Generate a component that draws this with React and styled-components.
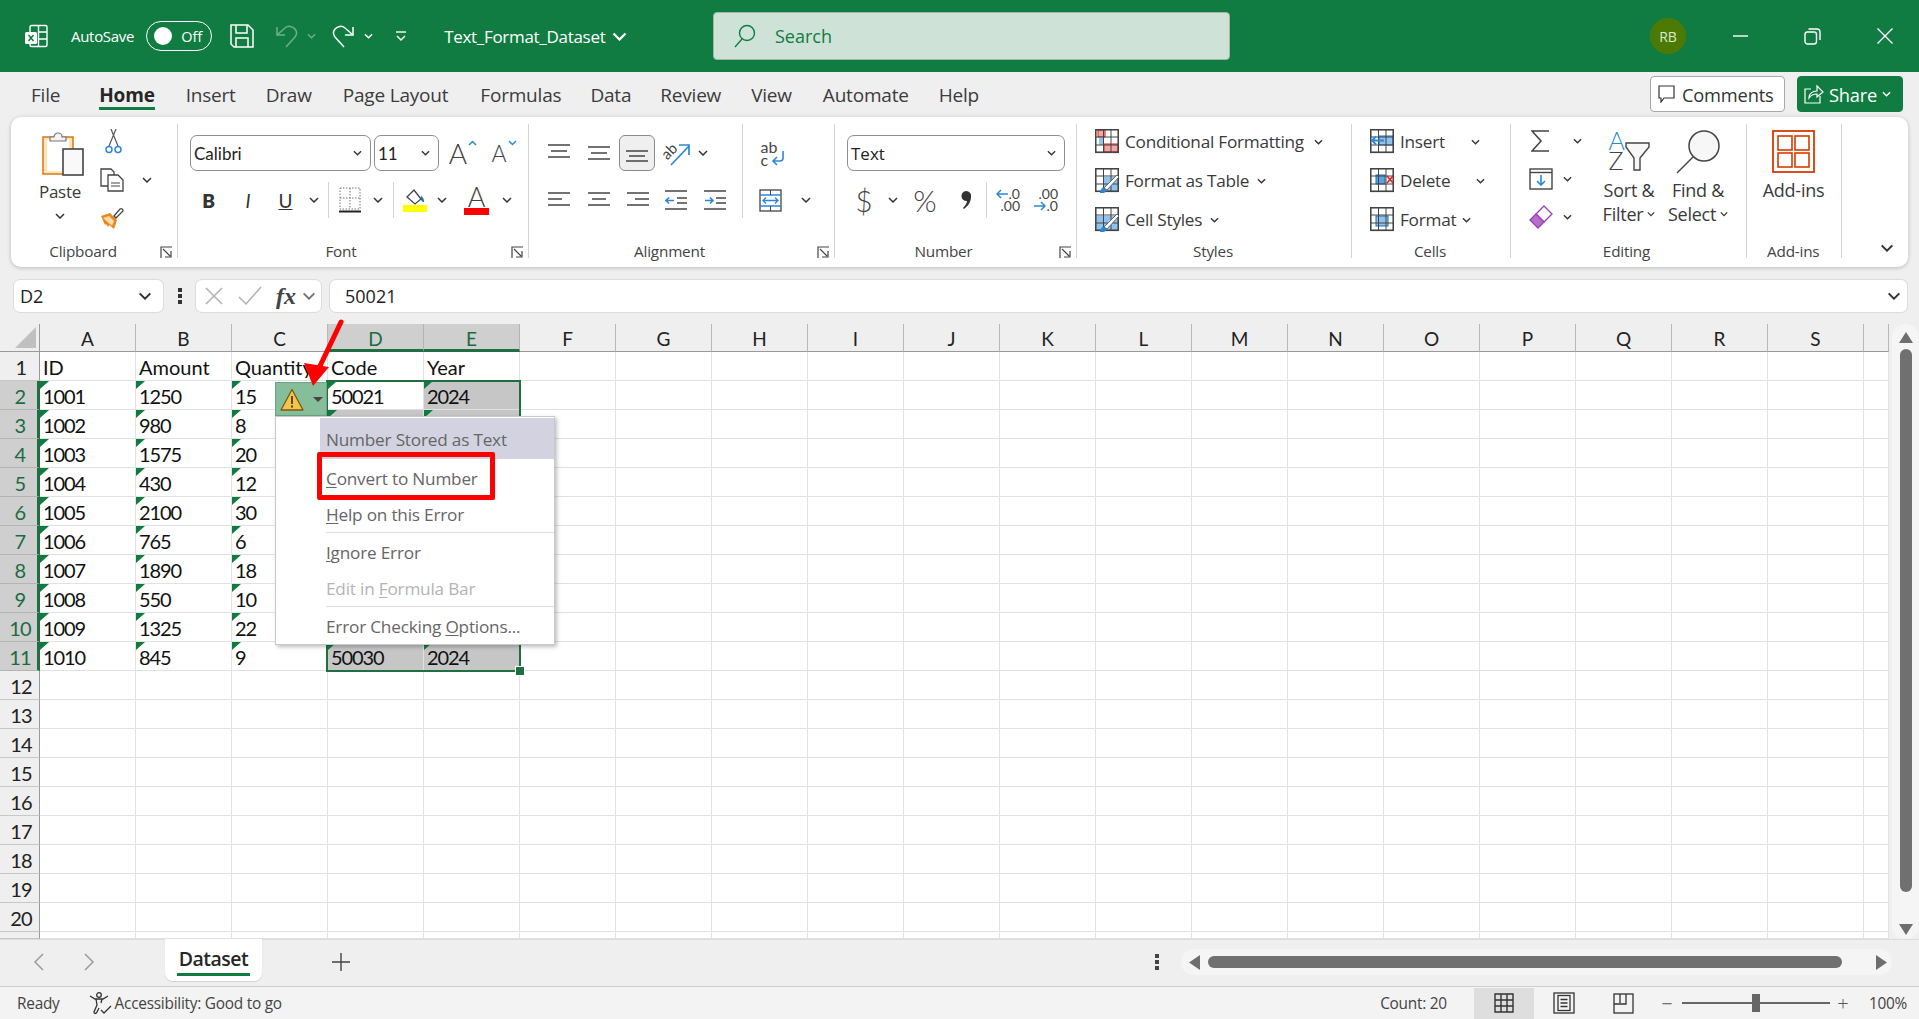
import React from 'react';
import styled, { createGlobalStyle } from 'styled-components';

const green = '#107c41';
const ui = '"Open Sans", "Noto Sans", sans-serif';
const calibri = 'Lato, "Open Sans", sans-serif';

const Global = createGlobalStyle`
  html, body { margin: 0; padding: 0; background: #efefef; overflow: hidden; }
  * { box-sizing: border-box; }
  svg { display: block; flex: none; }
`;

const Page = styled.div`
  width: 1919px;
  height: 1019px;
  display: flex;
  flex-direction: column;
  background: #efefef;
  font-family: ${ui};
  color: #333;
  overflow: hidden;
`;

/* ---------- title bar ---------- */
const TitleBar = styled.div`
  height: 72px;
  flex: none;
  background: ${green};
  display: flex;
  align-items: center;
  color: #fff;
`;
const QuickAccess = styled.div`
  width: 713px;
  flex: none;
  display: flex;
  align-items: center;
  padding-left: 24px;
`;
const Spaced = styled.div`
  margin-left: ${(p) => p.$ml || 0}px;
  display: flex;
  align-items: center;
`;
const TitleText = styled.span`
  margin-left: ${(p) => p.$ml || 0}px;
  font-size: ${(p) => p.$size || 15}px;
  letter-spacing: -0.3px;
  white-space: nowrap;
`;
const Toggle = styled.div`
  margin-left: 12px;
  width: 66px;
  height: 30px;
  border: 1.5px solid #fff;
  border-radius: 15px;
  display: flex;
  align-items: center;
  padding-left: 7px;
  font-size: 14.5px;
  gap: 9px;
  &::before {
    content: '';
    width: 18px;
    height: 18px;
    border-radius: 50%;
    background: #fff;
  }
`;
const SearchBox = styled.div`
  width: 517px;
  height: 48px;
  flex: none;
  background: #cfe2d7;
  border: 1px solid #9fb8aa;
  border-radius: 4px;
  display: flex;
  align-items: center;
  padding-left: 20px;
  gap: 19px;
  color: ${green};
  font-size: 18px;
`;
const WindowControls = styled.div`
  flex: 1;
  display: flex;
  align-items: center;
  justify-content: flex-end;
  padding-right: 26px;
`;
const Avatar = styled.div`
  width: 36px;
  height: 36px;
  border-radius: 50%;
  background: #4d7a05;
  color: #d8ecd0;
  font-size: 14px;
  display: flex;
  align-items: center;
  justify-content: center;
`;

/* ---------- menu tabs ---------- */
const TabsRow = styled.div`
  height: 45px;
  flex: none;
  display: flex;
  align-items: center;
  padding: 0 16px 0 31px;
`;
const Tab = styled.div`
  position: relative;
  margin-left: ${(p) => p.$ml}px;
  font-size: 19px;
  letter-spacing: -0.2px;
  font-weight: ${(p) => (p.$active ? 700 : 400)};
  color: ${(p) => (p.$active ? '#262626' : '#3c3c3c')};
  white-space: nowrap;
  ${(p) =>
    p.$active &&
    `&::after {
      content: '';
      position: absolute;
      left: 0;
      right: 0;
      bottom: -2px;
      height: 3px;
      background: ${green};
    }`}
`;
const TabActions = styled.div`
  margin-left: auto;
  display: flex;
  gap: 12px;
  align-self: flex-start;
  margin-top: 4px;
`;
const ActionButton = styled.div`
  height: 36px;
  width: ${(p) => p.$w}px;
  border-radius: 4px;
  display: flex;
  align-items: center;
  gap: ${(p) => p.$gap}px;
  padding-left: ${(p) => p.$pad}px;
  font-size: 18.3px;
  letter-spacing: -0.2px;
  background: ${(p) => (p.$primary ? green : '#fff')};
  color: ${(p) => (p.$primary ? '#fff' : '#333')};
  border: 1px solid ${(p) => (p.$primary ? green : '#a8a8a8')};
`;

/* ---------- ribbon ---------- */
const Ribbon = styled.div`
  height: 150px;
  flex: none;
  margin: 0 11px 0 11px;
  background: #fff;
  border-radius: 10px;
  box-shadow: 0 1px 4px rgba(0, 0, 0, 0.22);
  display: flex;
  padding-top: 7px;
`;
const Group = styled.div`
  width: ${(p) => p.$w}px;
  height: 134px;
  flex: none;
  display: flex;
  flex-direction: column;
  border-right: 1.5px solid #d4d4d4;
`;
const GroupBody = styled.div`
  flex: 1;
  display: flex;
  min-height: 0;
  padding-left: ${(p) => p.$pad || 0}px;
`;
const GroupLabel = styled.div`
  height: 20px;
  flex: none;
  display: grid;
  grid-template-columns: 20px 1fr 20px;
  align-items: center;
  font-size: 15.3px;
  line-height: 14px;
  letter-spacing: -0.2px;
  color: #444;
  text-align: center;
  padding-top: 6px;
  & > span {
    grid-column: 2;
    margin-right: ${(p) => p.$shift || 0}px;
    white-space: nowrap;
  }
`;
const Launcher = styled.div`
  grid-column: 3;
  align-self: end;
  justify-self: end;
  margin-right: 5px;
`;
const Stack = styled.div`
  display: flex;
  flex-direction: column;
  width: ${(p) => (p.$w ? `${p.$w}px` : 'auto')};
  padding-top: ${(p) => p.$top || 0}px;
  margin-top: ${(p) => p.$mt || 0}px;
`;
const ToolRow = styled.div`
  height: ${(p) => p.$h || 36}px;
  display: flex;
  align-items: center;
  margin-top: ${(p) => p.$mt || 0}px;
  margin-left: ${(p) => p.$ml || 0}px;
  gap: ${(p) => p.$gap || 0}px;
  flex: none;
`;
const Tool = styled.div`
  width: ${(p) => p.$w}px;
  height: ${(p) => (p.$active ? '36px' : 'auto')};
  flex: none;
  display: flex;
  justify-content: center;
  align-items: center;
  ${(p) =>
    p.$active &&
    `background: #efefef; border: 1px solid #8a8a8a; border-radius: 6px;`}
`;
const Sep = styled.div`
  width: 1px;
  height: ${(p) => p.$h || 36}px;
  flex: none;
  background: #d4d4d4;
  margin: 0 ${(p) => p.$m || 0}px;
`;
const ComboBox = styled.div`
  width: ${(p) => p.$w}px;
  height: 36px;
  flex: none;
  border: 1px solid #8e8e8e;
  border-radius: 7px;
  display: flex;
  align-items: center;
  justify-content: space-between;
  padding: 0 8px 0 3px;
  font-family: ${(p) => (p.$lato ? calibri : ui)};
  font-size: 17px;
  color: #222;
`;
const BoldGlyph = styled.span`
  font-family: ${calibri};
  font-size: 19px;
  font-weight: ${(p) => (p.$b ? 800 : 400)};
  font-style: ${(p) => (p.$i ? 'italic' : 'normal')};
  text-decoration: ${(p) => (p.$u ? 'underline' : 'none')};
  color: #333;
`;
const BigGlyph = styled.span`
  font-size: ${(p) => p.$size || 30}px;
  line-height: 1;
  font-family: ${calibri};
  color: #444;
  font-weight: 300;
`;
const Letter = styled.span`
  display: block;
  font-family: ${calibri};
  font-size: ${(p) => p.$size}px;
  line-height: ${(p) => p.$lh || p.$size}px;
  height: ${(p) => p.$lh || p.$size}px;
  color: ${(p) => p.$c || '#444'};
  font-weight: ${(p) => p.$weight || 400};
`;
const GrowGroup = styled.div`
  display: flex;
  align-items: flex-start;
  gap: 1px;
  & > svg {
    margin-top: 2px;
  }
`;
const ColorGlyph = styled.div`
  display: flex;
  flex-direction: column;
  align-items: center;
  width: 25px;
  &::after {
    content: '';
    width: 25px;
    height: 7px;
    background: #f00;
  }
`;
const WrapGlyph = styled.div`
  display: flex;
  align-items: flex-end;
  & > svg {
    margin-left: -6px;
  }
`;
const LetterColumn = styled.div`
  display: flex;
  flex-direction: column;
  align-items: flex-start;
`;
const DecimalGlyph = styled.div`
  width: 24px;
  display: flex;
  flex-direction: column;
  align-items: ${(p) => (p.$more ? 'flex-start' : 'flex-end')};
`;
const DecimalLine = styled.div`
  height: 12px;
  display: flex;
  align-items: center;
  justify-content: flex-end;
  width: 24px;
  gap: 1px;
  font-family: ${calibri};
  font-size: 14px;
  line-height: 12px;
  color: #444;
`;
const SortGlyph = styled.div`
  display: flex;
  align-items: flex-start;
  gap: 0;
`;
const ListLine = styled.div`
  height: 39px;
  display: flex;
  align-items: center;
  flex: none;
  font-size: 17.2px;
  letter-spacing: -0.25px;
  white-space: nowrap;
  color: #3a3a3a;
  gap: 6px;
`;
const ChevGap = styled.span`
  margin-left: ${(p) => p.$ml || 0}px;
  display: flex;
`;
const BigButton = styled.div`
  width: ${(p) => p.$w}px;
  flex: none;
  display: flex;
  flex-direction: column;
  align-items: center;
  padding-top: 6px;
  font-size: ${(p) => p.$size || 18}px;
  letter-spacing: -0.25px;
  line-height: 24px;
  color: #3a3a3a;
  white-space: nowrap;
`;
const IconSlot = styled.div`
  height: ${(p) => p.$h}px;
  margin-left: ${(p) => p.$ml || 0}px;
  flex: none;
`;
const TextLine = styled.div`
  display: flex;
  align-items: center;
  gap: 4px;
`;
const CollapseArea = styled.div`
  flex: 1;
  display: flex;
  justify-content: flex-end;
  align-items: flex-end;
  padding: 0 14px 15px 0;
`;

/* ---------- formula bar ---------- */
const FormulaBar = styled.div`
  height: 57px;
  flex: none;
  display: flex;
  padding: 12px 11px 11px 13px;
`;
const FieldBox = styled.div`
  height: 34px;
  background: #fff;
  border: 1px solid #dcdcdc;
  border-radius: 7px;
  display: flex;
  align-items: center;
  font-size: 18px;
  color: #222;
`;
const NameBox = styled(FieldBox)`
  width: 151px;
  justify-content: space-between;
  padding: 0 11px 0 6px;
  font-family: ${ui};
`;
const Dots = styled.div`
  width: 31px;
  display: flex;
  justify-content: center;
  align-items: center;
`;
const FxBox = styled(FieldBox)`
  width: 127px;
  padding-left: 8px;
`;
const FxGlyph = styled.span`
  font-family: 'Liberation Serif', serif;
  font-style: italic;
  font-size: 24px;
  font-weight: 700;
  color: #444;
  margin: 0 6px 0 14px;
`;
const FormulaInput = styled(FieldBox)`
  margin-left: 7px;
  flex: 1;
  justify-content: space-between;
  padding: 0 6px 0 15px;
  font-family: ${ui};
`;

/* ---------- sheet ---------- */
const SheetArea = styled.div`
  height: 615px;
  flex: none;
  display: flex;
`;
const GridWrap = styled.div`
  position: relative;
  width: 1889px;
  flex: none;
  background: #fff;
`;
const Grid = styled.div`
  display: grid;
  grid-template-columns: 40px repeat(19, 96px) 25px;
  grid-template-rows: 28px repeat(20, 29px) 7px;
  font-family: ${calibri};
  font-size: 20px;
  color: #111;
  overflow: hidden;
`;
const Corner = styled.div`
  background: #efefef;
  border-right: 1px solid #9a9a9a;
  border-bottom: 1.5px solid #9a9a9a;
  display: flex;
  align-items: flex-end;
  justify-content: flex-end;
  padding: 0 3px 3px 0;
  &::after {
    content: '';
    border-bottom: 21px solid #c0c0c0;
    border-left: 21px solid transparent;
  }
`;
const ColHead = styled.div`
  background: ${(p) => (p.$sel ? '#cfcfcf' : '#efefef')};
  color: ${(p) => (p.$sel ? '#1c6b3f' : '#222')};
  border-right: 1px solid ${(p) => (p.$sel ? '#b4b4b4' : '#b8b8b8')};
  border-bottom: ${(p) => (p.$sel ? `3px solid #1f6f43` : '1.5px solid #9a9a9a')};
  display: flex;
  justify-content: center;
  align-items: center;
  font-size: 19px;
  padding-top: ${(p) => (p.$sel ? 3 : 2)}px;
`;
const RowHead = styled.div`
  background: ${(p) => (p.$sel ? '#cfcfcf' : '#efefef')};
  color: ${(p) => (p.$sel ? '#1c6b3f' : '#222')};
  border-right: ${(p) => (p.$sel ? '3px solid #1f6f43' : '1px solid #9a9a9a')};
  border-bottom: 1px solid ${(p) => (p.$sel ? '#b4b4b4' : '#c8c8c8')};
  display: flex;
  justify-content: center;
  align-items: center;
  padding: 2px 0 0 3px;
  letter-spacing: -0.8px;
`;
const Cell = styled.div`
  position: relative;
  background: ${(p) => (p.$sel ? '#c6c6c6' : '#fff')};
  border-right: 1px solid #e1e1e1;
  border-bottom: 1px solid #e1e1e1;
  display: flex;
  align-items: center;
  padding: 2px 0 0 3px;
  white-space: nowrap;
  letter-spacing: ${(p) => (p.$num ? '-1.1px' : '0')};
  ${(p) =>
    p.$flag &&
    `&::before {
      content: '';
      position: absolute;
      left: 0;
      top: 0;
      border-top: 8px solid #0f7b3e;
      border-right: 9px solid transparent;
    }`}
`;
const Selection = styled.div`
  position: absolute;
  left: 326px;
  top: 56px;
  width: 195px;
  height: 292px;
  border: 2.5px solid #1f6f43;
  pointer-events: none;
  &::after {
    content: '';
    position: absolute;
    right: -6px;
    bottom: -6px;
    width: 8px;
    height: 8px;
    background: #1f6f43;
    border: 1px solid #fff;
  }
`;
const ErrorButton = styled.div`
  position: absolute;
  left: 275px;
  top: 58px;
  width: 52px;
  height: 34px;
  background: #86bd9a;
  border: 1px solid #6aa582;
  display: flex;
  align-items: center;
  padding-left: 4px;
  gap: 9px;
`;
const Popup = styled.div`
  position: absolute;
  left: 275px;
  top: 92px;
  width: 280px;
  height: 229px;
  background: #fff;
  border: 1px solid #c9c9c9;
  box-shadow: 2px 2px 4px rgba(0, 0, 0, 0.25);
  font-family: ${ui};
  font-size: 17.2px;
  letter-spacing: -0.2px;
  color: #666;
`;
const PopupTitle = styled.div`
  margin: 1px 0 2px 44px;
  height: 41px;
  background: #d2d2e0;
  padding: 1px 0 0 6px;
  display: flex;
  align-items: center;
`;
const PopupItem = styled.div`
  height: 36px;
  padding: 0 0 2px 50px;
  display: flex;
  align-items: center;
  color: ${(p) => (p.$disabled ? '#b4b4b4' : '#666')};
  white-space: pre;
  & u {
    text-underline-offset: 2px;
  }
`;
const PopupRule = styled.div`
  height: 1px;
  background: #dedede;
  margin: -1px 0 2px 50px;
`;
const RedBox = styled.div`
  position: absolute;
  left: 41px;
  top: 35px;
  width: 178px;
  height: 48px;
  border: 5px solid #f00;
  border-radius: 2px;
`;
const ArrowMark = styled.svg`
  position: absolute;
  left: 300px;
  top: -6px;
`;

/* ---------- vertical scroll ---------- */
const VScroll = styled.div`
  flex: 1;
  display: flex;
  flex-direction: column;
  align-items: center;
  margin-left: 3px;
  background: #f5f5f5;
  border-radius: 13px;
  padding: 8px 0 4px;
`;
const VThumb = styled.div`
  width: 12px;
  height: 543px;
  margin-top: 6px;
  background: #707070;
  border-radius: 6px;
`;
const ArrowPad = styled.div`
  margin-top: ${(p) => p.$mt || 0}px;
  margin-left: ${(p) => p.$ml || 0}px;
`;

/* ---------- sheet tabs ---------- */
const TabStrip = styled.div`
  height: 48px;
  flex: none;
  display: flex;
  align-items: flex-start;
  border-bottom: 1.5px solid #cfcfcf;
  border-top: 1px solid #dcdcdc;
`;
const Nav = styled.div`
  width: 165px;
  height: 44px;
  flex: none;
  display: flex;
  align-items: center;
  padding-left: 34px;
  gap: 40px;
`;
const SheetTab = styled.div`
  width: 97px;
  height: 42px;
  flex: none;
  background: #fff;
  border-radius: 0 0 8px 8px;
  display: flex;
  justify-content: center;
  padding-top: 5px;
  box-shadow: 0 1px 1px rgba(0, 0, 0, 0.12);
  margin-top: -1px;
`;
const SheetName = styled.div`
  height: 32px;
  width: 73px;
  text-align: center;
  border-bottom: 3px solid ${green};
  font-size: 19.5px;
  font-weight: 600;
  letter-spacing: -0.5px;
  color: #262626;
  line-height: 29px;
  white-space: nowrap;
`;
const AddSheet = styled.div`
  width: 150px;
  height: 44px;
  display: flex;
  align-items: center;
  padding-left: 70px;
`;
const MoreDots = styled.div`
  width: 24px;
  height: 44px;
  margin-left: 733px;
  margin-right: 12px;
  display: flex;
  align-items: center;
  justify-content: center;
`;
const HScroll = styled.div`
  margin-top: 9px;
  width: 711px;
  height: 26px;
  flex: none;
  background: #f5f5f5;
  border-radius: 13px;
  display: flex;
  align-items: center;
  padding-left: 8px;
  gap: 8px;
`;
const HThumb = styled.div`
  width: 634px;
  height: 12px;
  background: #707070;
  border-radius: 6px;
`;

/* ---------- status bar ---------- */
const StatusBar = styled.div`
  flex: 1;
  display: flex;
  align-items: center;
  background: #f3f3f3;
  font-size: 15.4px;
  letter-spacing: -0.25px;
  color: #444;
  padding: 0 12px 0 17px;
`;
const StatusText = styled.span`
  margin-left: ${(p) => p.$ml || 0}px;
  white-space: nowrap;
`;
const StatusRight = styled.div`
  margin-left: auto;
  display: flex;
  align-items: center;
`;
const CountText = styled.span`
  margin-right: 27px;
`;
const ViewButton = styled.div`
  width: 60px;
  height: 31px;
  flex: none;
  display: flex;
  align-items: center;
  justify-content: center;
  background: ${(p) => (p.$active ? '#dedede' : 'transparent')};
`;
const ZoomSlider = styled.div`
  position: relative;
  width: 148px;
  height: 2px;
  background: #666;
  margin: 0 3px 0 5px;
  &::after {
    content: '';
    position: absolute;
    left: 70px;
    top: -8px;
    width: 8px;
    height: 18px;
    background: #666;
  }
`;
const ZoomMark = styled.span`
  font-size: 20px;
  font-weight: 300;
  color: #555;
  width: 20px;
  text-align: center;
  margin-left: ${(p) => p.$ml || 0}px;
`;

/* ---------- icons ---------- */
const Chev = ({ c = '#333', w = 10, h = 6, sw = 1.5 }) => (
  <svg width={w} height={h} viewBox="0 0 10 6">
    <path d="M1 1l4 4 4-4" fill="none" stroke={c} strokeWidth={sw} />
  </svg>
);
const ExcelIcon = () => (
  <svg width="24" height="24" viewBox="0 0 24 24" fill="none" stroke="#fff" strokeWidth="1.4">
    <path d="M6 8V3a1.5 1.5 0 0 1 1.5-1.5h14A1.5 1.5 0 0 1 23 3v18a1.5 1.5 0 0 1-1.5 1.5h-14A1.5 1.5 0 0 1 6 21v-1" />
    <path d="M14.5 1.5v21M14.5 8H23M14.5 15H23" />
    <rect x="1" y="8" width="12" height="12" rx="1.5" fill="#fff" stroke="none" />
    <path d="M4.5 11l5 6M9.5 11l-5 6" stroke={green} strokeWidth="1.5" />
  </svg>
);
const SaveIcon = () => (
  <svg width="24" height="24" viewBox="0 0 24 24" fill="none" stroke="#fff" strokeWidth="1.5">
    <path d="M1 1h17l5 5v17H4l-3-3z" />
    <path d="M6 1v8h11V1M6 23v-9h12v9" />
  </svg>
);
const UndoIcon = ({ c = '#fff', flip }) => (
  <svg width="23" height="24" viewBox="0 0 23 24" fill="none" stroke={c} strokeWidth="1.5">
    {flip ? (
      <g>
        <path d="M12 23L3 13a6.5 6.5 0 0 1 0-8 7 7 0 0 1 10-1l8 7" />
        <path d="M21 3v8h-8" />
      </g>
    ) : (
      <g>
        <path d="M11 23l9-10a6.5 6.5 0 0 0 0-8 7 7 0 0 0-10-1L2 11" />
        <path d="M2 3v8h8" />
      </g>
    )}
  </svg>
);
const CustomizeIcon = () => (
  <svg width="10" height="11" viewBox="0 0 10 11" fill="none" stroke="#fff" strokeWidth="1.4">
    <path d="M0 1h10" />
    <path d="M1 5l4 4 4-4" />
  </svg>
);
const SearchIcon = () => (
  <svg width="22" height="24" viewBox="0 0 22 24" fill="none" stroke={green} strokeWidth="1.4">
    <circle cx="13" cy="9" r="7.5" />
    <path d="M8 15L1 23" />
  </svg>
);
const MinIcon = () => (
  <svg width="15" height="2" viewBox="0 0 15 2">
    <path d="M0 1h15" stroke="#fff" strokeWidth="1.4" />
  </svg>
);
const RestoreIcon = () => (
  <svg width="17" height="17" viewBox="0 0 17 17" fill="none" stroke="#fff" strokeWidth="1.4">
    <rect x="1" y="4" width="11.5" height="12" rx="2.5" />
    <path d="M4.5 1H13a3 3 0 0 1 3 3v8" />
  </svg>
);
const CloseIcon = () => (
  <svg width="16" height="16" viewBox="0 0 16 16" stroke="#fff" strokeWidth="1.4">
    <path d="M0.5 0.5l15 15M15.5 0.5l-15 15" />
  </svg>
);
const CommentIcon = () => (
  <svg width="17" height="18" viewBox="0 0 17 18" fill="none" stroke="#333" strokeWidth="1.2">
    <path d="M1 1h15v12H6l-3 4v-4H1z" />
  </svg>
);
const ShareIcon = () => (
  <svg width="20" height="20" viewBox="0 0 20 20" fill="none" stroke="#fff" strokeWidth="1.2">
    <path d="M7 5H1v14h15v-7" />
    <path d="M5 14c0-5 4-7 8-7V2l6 6-6 5V10c-3 0-6 1-8 4z" />
  </svg>
);
const PasteIcon = () => (
  <svg width="42" height="46" viewBox="0 0 42 46">
    <rect x="1" y="7" width="30" height="37" fill="#fde6bd" stroke="#d9780f" strokeWidth="1.5" />
    <rect x="5" y="10" width="22" height="31" fill="#fff" />
    <path d="M8 11V7h4a4 4 0 0 1 8 0h4v4z" fill="#f2f2f2" stroke="#777" strokeWidth="1.2" />
    <rect x="21" y="19" width="20" height="26" fill="#f9f9f9" stroke="#444" strokeWidth="1.6" />
  </svg>
);
const ScissorsIcon = () => (
  <svg width="17" height="25" viewBox="0 0 17 25" fill="none">
    <path d="M4 17L11 0M13 17L6 0" stroke="#555" strokeWidth="1.2" />
    <circle cx="4" cy="20.5" r="3" stroke="#2b88d8" strokeWidth="1.5" />
    <circle cx="13" cy="20.5" r="3" stroke="#2b88d8" strokeWidth="1.5" />
  </svg>
);
const CopyIcon = () => (
  <svg width="24" height="24" viewBox="0 0 24 24" fill="#fff" stroke="#444" strokeWidth="1.3">
    <path d="M1 1h10l3 3v14H1z" />
    <path d="M8 7h10l5 5v11H8z" />
    <path d="M11 15h9M11 18h9" strokeWidth="1" />
  </svg>
);
const BrushIcon = () => (
  <svg width="24" height="23" viewBox="0 0 24 23">
    <path d="M1 9l9-3 7 7-3 9-5-4-1 2-2-3-1 1z" fill="#e8871e" />
    <path d="M3 11l6-2 5 5-2 5z" fill="#fbd9a8" />
    <path d="M14 9l6-7a2 2 0 0 1 3 2l-7 7z" fill="#fff" stroke="#444" strokeWidth="1.3" />
  </svg>
);
const LauncherIcon = () => (
  <svg width="12" height="12" viewBox="0 0 12 12" fill="none" stroke="#444" strokeWidth="1.2">
    <path d="M1 12V1h11" />
    <path d="M3 3l7 7M5 11h6V5" />
  </svg>
);
const GrowA = ({ down }) => (
  <GrowGroup>
    <Letter $size={down ? 23 : 28} $lh={30} $weight={300}>A</Letter>
    <svg width="9" height="6" viewBox="0 0 9 6" fill="none">
      <path d={down ? 'M1 1l3.5 3.5L8 1' : 'M1 5l3.5-3.5L8 5'} stroke="#2b88d8" strokeWidth="1.5" />
    </svg>
  </GrowGroup>
);
const BordersIcon = () => (
  <svg width="22" height="26" viewBox="0 0 22 26" fill="none">
    <path d="M1 1h20v21H1zM11 1v21M1 11h20" stroke="#777" strokeWidth="1" strokeDasharray="1.5 1.5" />
    <path d="M0 24.5h22" stroke="#222" strokeWidth="2" />
  </svg>
);
const FillIcon = () => (
  <svg width="24" height="24" viewBox="0 0 24 24">
    <path d="M4 9l7-7 7 9-6 5z" fill="#fff" stroke="#444" strokeWidth="1.3" />
    <path d="M18 8c2 1 3 3 3 6-2 0-4-2-3-6z" fill="#1f6fb5" />
    <rect x="0" y="17" width="24" height="7" fill="#ff0" />
  </svg>
);
const FontColorIcon = () => (
  <ColorGlyph>
    <Letter $size={27} $lh={22} $weight={300}>A</Letter>
  </ColorGlyph>
);
const Lines = ({ rows, w = 22, h = 20, arrow }) => (
  <svg width={w} height={h} viewBox={`0 0 ${w} ${h}`} fill="none">
    {rows.map(([a, b, y], i) => (
      <path key={i} d={`M${a} ${y}H${b}`} stroke="#444" strokeWidth="1.5" />
    ))}
    {arrow && <path d={arrow} stroke="#2b88d8" strokeWidth="1.6" />}
  </svg>
);
const OrientIcon = () => (
  <svg width="36" height="36" viewBox="-3 -3 36 36" fill="none">
    <text x="1" y="18" fontFamily={calibri} fontSize="15" fill="#444" transform="rotate(-45 9 14)">ab</text>
    <path d="M10 27L28 8M18 7h10v10" stroke="#2b88d8" strokeWidth="1.7" />
  </svg>
);
const WrapIcon = () => (
  <WrapGlyph>
    <LetterColumn>
      <Letter $size={16} $lh={13}>ab</Letter>
      <Letter $size={16} $lh={13}>c</Letter>
    </LetterColumn>
    <svg width="14" height="16" viewBox="0 0 14 16" fill="none">
      <path d="M12 1v7a3 3 0 0 1-3 3H2M6 7l-4 4 4 4" stroke="#2b88d8" strokeWidth="1.6" />
    </svg>
  </WrapGlyph>
);
const MergeIcon = () => (
  <svg width="23" height="23" viewBox="0 0 23 23" fill="none">
    <rect x="1" y="1" width="21" height="21" stroke="#444" strokeWidth="1.3" />
    <path d="M1 6h21M1 17h21" stroke="#2b88d8" strokeWidth="1.6" />
    <path d="M11.5 1v5M11.5 17v5" stroke="#444" />
    <path d="M4 11.5h15M7 8.5l-3 3 3 3M16 8.5l3 3-3 3" stroke="#2b88d8" strokeWidth="1.3" />
  </svg>
);
const SmallArrow = ({ right }) => (
  <svg width="12" height="10" viewBox="0 0 12 10" fill="none">
    <path d={right ? 'M0 5h11M7 1l4 4-4 4' : 'M12 5H1M5 1L1 5l4 4'} stroke="#2b88d8" strokeWidth="1.5" />
  </svg>
);
const DecimalIcon = ({ more }) => (
  <DecimalGlyph $more={more}>
    {more ? (
      <>
        <DecimalLine>.00</DecimalLine>
        <DecimalLine><SmallArrow right />.0</DecimalLine>
      </>
    ) : (
      <>
        <DecimalLine><SmallArrow />.0</DecimalLine>
        <DecimalLine>.00</DecimalLine>
      </>
    )}
  </DecimalGlyph>
);
const CommaIcon = () => (
  <svg width="12" height="20" viewBox="0 0 12 20">
    <path d="M6 1a5 5 0 0 1 5 6c0 5-3 9-7 12l-1-1c2-2 4-5 4-7a5 5 0 1 1-1-10z" fill="#333" />
  </svg>
);
const TableIcon = ({ kind }) => (
  <svg width="24" height="26" viewBox="0 0 24 26" fill="none">
    {kind === 'cond' && (
      <g>
        <rect x="3" y="1" width="7" height="7" fill="#f4a5a5" stroke="#e02020" />
        <rect x="9" y="15" width="14" height="8" fill="#f4a5a5" stroke="#e02020" />
        <rect x="4" y="8" width="5" height="8" fill="#8fc3ee" />
      </g>
    )}
    {kind === 'table' && <path d="M9 9h14v14H5l4-6z" fill="#8fc3ee" />}
    {kind === 'styles' && <path d="M1 9h22v14H1z" fill="#8fc3ee" />}
    {kind === 'insert' && <rect x="9" y="7" width="14" height="9" fill="#8fc3ee" stroke="#1f6fb5" />}
    {kind === 'delete' && <rect x="6" y="7" width="9" height="9" fill="#5aa5e0" stroke="#1f6fb5" />}
    {kind === 'format' && <rect x="6" y="9" width="12" height="10" fill="#8fc3ee" stroke="#1f6fb5" />}
    <path d="M1 1h22v22H1zM1 8h22M1 16h22M8.5 1v22M16 1v22" stroke="#444" strokeWidth="1" />
    <rect x="0.5" y="0.5" width="23" height="23" stroke="#444" strokeWidth="1.2" />
    {(kind === 'table' || kind === 'styles') && (
      <g>
        <path d="M5 25c0-4 3-6 5-5s1 4-1 5z" fill="#2b88d8" />
        <path d="M9 20L22 7l2 2-12 13z" fill="#fff" stroke="#666" />
      </g>
    )}
    {kind === 'insert' && <path d="M14 11.5H2M6 7.5l-4 4 4 4" stroke="#2b88d8" strokeWidth="1.8" />}
    {kind === 'delete' && <path d="M17 8l6 7M23 8l-6 7" stroke="#e02020" strokeWidth="1.6" />}
  </svg>
);
const SigmaIcon = () => (
  <svg width="18" height="22" viewBox="0 0 18 22" fill="none" stroke="#444" strokeWidth="1.6">
    <path d="M18 1H1l9 10-9 10h17" />
  </svg>
);
const FillDownIcon = () => (
  <svg width="24" height="22" viewBox="0 0 24 22" fill="none">
    <rect x="1" y="1" width="22" height="20" stroke="#444" strokeWidth="1.4" />
    <path d="M1 4.5h22" stroke="#444" strokeWidth="1.4" />
    <path d="M12 7v10M8 13l4 4 4-4" stroke="#2b88d8" strokeWidth="1.6" />
  </svg>
);
const EraserIcon = () => (
  <svg width="24" height="24" viewBox="0 0 24 24">
    <path d="M15 1l8 8-8 8-8-8z" fill="#fff" stroke="#9b3fb5" strokeWidth="1.3" />
    <path d="M7 9l8 8-6 6-8-8z" fill="#b56fcb" stroke="#9b3fb5" strokeWidth="1.3" />
  </svg>
);
const SortIcon = () => (
  <SortGlyph>
    <LetterColumn>
      <Letter $size={25} $lh={20} $c="#2b88d8" $weight={300}>A</Letter>
      <Letter $size={25} $lh={21} $weight={300}>Z</Letter>
    </LetterColumn>
    <svg width="25" height="41" viewBox="0 0 25 41" fill="none">
      <path d="M1 13h23v4l-9 11v12H9V28L1 17z" fill="#f7f7f7" stroke="#444" strokeWidth="1.4" />
    </svg>
  </SortGlyph>
);
const FindIcon = () => (
  <svg width="44" height="44" viewBox="0 0 44 44" fill="none" stroke="#444" strokeWidth="1.5">
    <circle cx="28" cy="16" r="15" fill="#f7f7f7" />
    <path d="M17 27L1 43" />
  </svg>
);
const AddinsIcon = () => (
  <svg width="43" height="43" viewBox="0 0 43 43" fill="none" stroke="#d83b01" strokeWidth="1.6">
    <rect x="1" y="1" width="41" height="41" strokeWidth="1.8" />
    <rect x="6" y="6" width="14" height="14" />
    <rect x="23" y="6" width="14" height="14" />
    <rect x="6" y="23" width="14" height="14" />
    <rect x="23" y="23" width="14" height="14" />
  </svg>
);
const MarkX = () => (
  <svg width="20" height="20" viewBox="0 0 20 20" stroke="#b0b0b0" strokeWidth="1.5">
    <path d="M2 2l16 16M18 2L2 18" />
  </svg>
);
const MarkCheck = () => (
  <svg width="24" height="20" viewBox="0 0 24 20" fill="none" stroke="#b0b0b0" strokeWidth="1.5">
    <path d="M1 11l7 7L23 1" />
  </svg>
);
const VDots = ({ c = '#333' }) => (
  <svg width="4" height="16" viewBox="0 0 4 16" fill={c}>
    <rect width="4" height="4" />
    <rect y="6" width="4" height="4" />
    <rect y="12" width="4" height="4" />
  </svg>
);
const WarnIcon = () => (
  <svg width="24" height="23" viewBox="0 0 24 23">
    <path d="M12 1.5L23 22H1z" fill="#f4c44a" stroke="#7a5a10" strokeWidth="1.3" strokeLinejoin="round" />
    <path d="M12 8v8" stroke="#333" strokeWidth="1.6" />
    <path d="M12 17.5v2" stroke="#333" strokeWidth="1.8" />
  </svg>
);
const Tri = ({ dir, c = '#6e6e6e', w = 10, h = 7 }) => {
  const pts = {
    down: `0,0 ${w},0 ${w / 2},${h}`,
    up: `0,${h} ${w},${h} ${w / 2},0`,
    left: `${w},0 ${w},${h} 0,${h / 2}`,
    right: `0,0 ${w},${h / 2} 0,${h}`,
  };
  return (
    <svg width={w} height={h} viewBox={`0 0 ${w} ${h}`}>
      <polygon points={pts[dir]} fill={c} />
    </svg>
  );
};
const NavArrow = ({ flip }) => (
  <svg width="10" height="18" viewBox="0 0 10 18" fill="none" stroke="#999" strokeWidth="1.5">
    <path d={flip ? 'M1 1l8 8-8 8' : 'M9 1L1 9l8 8'} />
  </svg>
);
const PlusIcon = () => (
  <svg width="18" height="18" viewBox="0 0 18 18" stroke="#444" strokeWidth="1.4">
    <path d="M9 0v18M0 9h18" />
  </svg>
);
const AccessIcon = () => (
  <svg width="24" height="24" viewBox="0 0 24 24" fill="none" stroke="#333" strokeWidth="1.3">
    <circle cx="10" cy="4" r="2.3" />
    <path d="M1 5l5 3h8l5-3M7 8l1 6-3 7c0 2 2 2 3 0l2-4M13 8l-1 4" />
    <path d="M12 19l3 3 7-7" />
  </svg>
);
const NormalViewIcon = () => (
  <svg width="20" height="20" viewBox="0 0 20 20" fill="none" stroke="#333" strokeWidth="1.4">
    <path d="M1 1h18v18H1zM7 1v18M13 1v18M1 7h18M1 13h18" />
  </svg>
);
const PageViewIcon = () => (
  <svg width="22" height="22" viewBox="0 0 22 22" fill="none" stroke="#333" strokeWidth="1.3">
    <rect x="1" y="1" width="20" height="20" />
    <rect x="5" y="3.5" width="12" height="15" />
    <path d="M7.5 7.5h7M7.5 11h7M7.5 14.5h7" />
  </svg>
);
const BreakViewIcon = () => (
  <svg width="21" height="21" viewBox="0 0 21 21" fill="none" stroke="#333" strokeWidth="1.3">
    <rect x="1" y="1" width="19" height="19" />
    <path d="M7 1v9M13 1v10H1" />
  </svg>
);

/* ---------- data ---------- */
const ids = [1001, 1002, 1003, 1004, 1005, 1006, 1007, 1008, 1009, 1010];
const amounts = [1250, 980, 1575, 430, 2100, 765, 1890, 550, 1325, 845];
const quantities = [15, 8, 20, 12, 30, 6, 18, 10, 22, 9];
const letters = 'ABCDEFGHIJKLMNOPQRS'.split('');
const headers = ['ID', 'Amount', 'Quantity', 'Code', 'Year'];
const tabs = [
  ['Insert', 31],
  ['Draw', 30],
  ['Page Layout', 31],
  ['Formulas', 32],
  ['Data', 29],
  ['Review', 29],
  ['View', 30],
  ['Automate', 31],
  ['Help', 30],
];

// rows 3-10 of Code and Year sit under the error menu in the picture
const cellValue = (row, col) => {
  if (row === 1) return headers[col] ?? '';
  const i = row - 2;
  if (i < 0 || i > 9) return '';
  if (col > 2 && i > 0 && i < 9) return '';
  return [ids[i], amounts[i], quantities[i], 50021 + i, 2024][col] ?? '';
};

const SheetGrid = () => {
  const cells = [];
  for (let r = 1; r <= 21; r++) {
    const selRow = r >= 2 && r <= 11;
    cells.push(
      <RowHead key={`h${r}`} $sel={selRow}>
        {r <= 20 ? r : ''}
      </RowHead>
    );
    for (let c = 0; c < 20; c++) {
      const inBlock = selRow && (c === 3 || c === 4);
      const active = r === 2 && c === 3;
      cells.push(
        <Cell key={`${r}-${c}`} $sel={inBlock && !active} $flag={selRow && c < 5} $num={selRow}>
          {cellValue(r, c)}
        </Cell>
      );
    }
  }
  return (
    <Grid>
      <Corner />
      {letters.map((l, i) => (
        <ColHead key={l} $sel={i === 3 || i === 4}>
          {l}
        </ColHead>
      ))}
      <ColHead />
      {cells}
    </Grid>
  );
};

const App = () => (
  <Page>
    <Global />
    <TitleBar>
      <QuickAccess>
        <ExcelIcon />
        <TitleText $ml={23}>AutoSave</TitleText>
        <Toggle>Off</Toggle>
        <Spaced $ml={18}><SaveIcon /></Spaced>
        <Spaced $ml={21}><UndoIcon c="#6fb08c" /></Spaced>
        <Spaced $ml={9}><Chev c="#6fb08c" w={9} /></Spaced>
        <Spaced $ml={16}><UndoIcon flip /></Spaced>
        <Spaced $ml={9}><Chev c="#fff" w={9} /></Spaced>
        <Spaced $ml={23}><CustomizeIcon /></Spaced>
        <TitleText $ml={38} $size={17}>Text_Format_Dataset</TitleText>
        <Spaced $ml={7}><Chev c="#fff" w={15} h={9} /></Spaced>
      </QuickAccess>
      <SearchBox>
        <SearchIcon />
        Search
      </SearchBox>
      <WindowControls>
        <Avatar>RB</Avatar>
        <Spaced $ml={47}><MinIcon /></Spaced>
        <Spaced $ml={56}><RestoreIcon /></Spaced>
        <Spaced $ml={56}><CloseIcon /></Spaced>
      </WindowControls>
    </TitleBar>

    <TabsRow>
      <Tab $ml={0}>File</Tab>
      <Tab $ml={39} $active>Home</Tab>
      {tabs.map(([name, ml]) => (
        <Tab key={name} $ml={ml}>{name}</Tab>
      ))}
      <TabActions>
        <ActionButton $w={135} $pad={7} $gap={7}>
          <CommentIcon />
          Comments
        </ActionButton>
        <ActionButton $w={106} $pad={6} $gap={5} $primary>
          <ShareIcon />
          Share
          <Chev c="#fff" w={9} />
        </ActionButton>
      </TabActions>
    </TabsRow>

    <Ribbon>
      <Group $w={167}>
        <GroupBody $pad={24}>
          <BigButton $w={50} $size={17}>
            <IconSlot $h={50} $ml={6}><PasteIcon /></IconSlot>
            Paste
            <ToolRow $h={24}><Chev /></ToolRow>
          </BigButton>
          <Stack $top={4}>
            <ToolRow $h={26} $ml={20}><ScissorsIcon /></ToolRow>
            <ToolRow $h={24} $mt={14} $ml={15} $gap={18}><CopyIcon /><Chev /></ToolRow>
            <ToolRow $h={24} $mt={14} $ml={15}><BrushIcon /></ToolRow>
          </Stack>
        </GroupBody>
        <GroupLabel $shift={22}>
          <span>Clipboard</span>
          <Launcher><LauncherIcon /></Launcher>
        </GroupLabel>
      </Group>

      <Group $w={351}>
        <GroupBody $pad={12}>
          <Stack $top={11}>
            <ToolRow $gap={3}>
              <ComboBox $w={181} $lato>Calibri<Chev w={9} /></ComboBox>
              <ComboBox $w={65} $lato>11<Chev w={9} /></ComboBox>
              <Tool $w={42}><GrowA /></Tool>
              <Tool $w={34}><GrowA down /></Tool>
            </ToolRow>
            <ToolRow $mt={11}>
              <Tool $w={37}><BoldGlyph $b>B</BoldGlyph></Tool>
              <Tool $w={42}><BoldGlyph $i>I</BoldGlyph></Tool>
              <Tool $w={33}><BoldGlyph $u>U</BoldGlyph></Tool>
              <Tool $w={24}><Chev /></Tool>
              <Sep $m={2} />
              <Tool $w={37}><BordersIcon /></Tool>
              <Tool $w={20}><Chev /></Tool>
              <Sep $m={5} />
              <Tool $w={31}><FillIcon /></Tool>
              <Tool $w={24}><Chev /></Tool>
              <Tool $w={45}><FontColorIcon /></Tool>
              <Tool $w={16}><Chev /></Tool>
            </ToolRow>
          </Stack>
        </GroupBody>
        <GroupLabel $shift={24}>
          <span>Font</span>
          <Launcher><LauncherIcon /></Launcher>
        </GroupLabel>
      </Group>

      <Group $w={306}>
        <GroupBody $pad={10}>
          <Stack $top={11} $w={203}>
            <ToolRow>
              <Tool $w={40}><Lines rows={[[0, 22, 2], [3, 19, 8], [0, 22, 14]]} /></Tool>
              <Tool $w={40}><Lines rows={[[0, 22, 4], [3, 19, 10], [0, 22, 16]]} /></Tool>
              <Tool $w={36} $active><Lines rows={[[0, 22, 8], [3, 19, 13], [0, 22, 18]]} /></Tool>
              <Tool $w={42}><OrientIcon /></Tool>
              <Tool $w={12}><Chev /></Tool>
            </ToolRow>
            <ToolRow $mt={11}>
              <Tool $w={40}><Lines rows={[[0, 22, 3], [0, 14, 9], [0, 22, 15]]} /></Tool>
              <Tool $w={40}><Lines rows={[[0, 22, 3], [4, 18, 9], [0, 22, 15]]} /></Tool>
              <Tool $w={38}><Lines rows={[[0, 22, 3], [8, 22, 9], [0, 22, 15]]} /></Tool>
              <Tool $w={38}><Lines rows={[[0, 22, 1], [12, 22, 8], [12, 22, 13], [0, 22, 19]]} arrow="M9 10.5H1M4 7.5l-3 3 3 3" /></Tool>
              <Tool $w={40}><Lines rows={[[0, 22, 1], [12, 22, 8], [12, 22, 13], [0, 22, 19]]} arrow="M1 10.5h8M6 7.5l3 3-3 3" /></Tool>
            </ToolRow>
          </Stack>
          <Sep $h={94} />
          <Stack $top={16}>
            <ToolRow $h={26}><Tool $w={60}><WrapIcon /></Tool></ToolRow>
            <ToolRow $mt={22} $h={24} $gap={3}>
              <Tool $w={55}><MergeIcon /></Tool>
              <Chev />
            </ToolRow>
          </Stack>
        </GroupBody>
        <GroupLabel $shift={24}>
          <span>Alignment</span>
          <Launcher><LauncherIcon /></Launcher>
        </GroupLabel>
      </Group>

      <Group $w={242}>
        <GroupBody $pad={12}>
          <Stack $top={11}>
            <ToolRow><ComboBox $w={218}>Text<Chev w={9} /></ComboBox></ToolRow>
            <ToolRow $mt={11}>
              <Tool $w={34}><BigGlyph>$</BigGlyph></Tool>
              <Tool $w={24}><Chev /></Tool>
              <Tool $w={40}><BigGlyph>%</BigGlyph></Tool>
              <Tool $w={41}><CommaIcon /></Tool>
              <Sep />
              <Tool $w={9} />
              <DecimalIcon />
              <Tool $w={14} />
              <DecimalIcon more />
            </ToolRow>
          </Stack>
        </GroupBody>
        <GroupLabel $shift={24}>
          <span>Number</span>
          <Launcher><LauncherIcon /></Launcher>
        </GroupLabel>
      </Group>

      <Group $w={275}>
        <GroupBody $pad={18}>
          <Stack $mt={-2}>
            <ListLine><TableIcon kind="cond" />Conditional Formatting<ChevGap $ml={4}><Chev w={9} /></ChevGap></ListLine>
            <ListLine><TableIcon kind="table" />Format as Table<ChevGap $ml={2}><Chev w={9} /></ChevGap></ListLine>
            <ListLine><TableIcon kind="styles" />Cell Styles<ChevGap $ml={2}><Chev w={9} /></ChevGap></ListLine>
          </Stack>
        </GroupBody>
        <GroupLabel $shift={2}>
          <span>Styles</span>
        </GroupLabel>
      </Group>

      <Group $w={159}>
        <GroupBody $pad={18}>
          <Stack $mt={-2}>
            <ListLine><TableIcon kind="insert" />Insert<ChevGap $ml={20}><Chev w={9} /></ChevGap></ListLine>
            <ListLine><TableIcon kind="delete" />Delete<ChevGap $ml={20}><Chev w={9} /></ChevGap></ListLine>
            <ListLine><TableIcon kind="format" />Format<ChevGap $ml={0}><Chev w={9} /></ChevGap></ListLine>
          </Stack>
        </GroupBody>
        <GroupLabel $shift={2}>
          <span>Cells</span>
        </GroupLabel>
      </Group>

      <Group $w={236}>
        <GroupBody $pad={18}>
          <Stack $top={4} $w={68}>
            <ToolRow $h={26} $gap={24} $ml={2}><SigmaIcon /><Chev w={9} /></ToolRow>
            <ToolRow $h={26} $mt={12} $gap={10}><FillDownIcon /><Chev w={9} /></ToolRow>
            <ToolRow $h={26} $mt={12} $gap={10}><EraserIcon /><Chev w={9} /></ToolRow>
          </Stack>
          <BigButton $w={64}>
            <IconSlot $h={48}><SortIcon /></IconSlot>
            <span>Sort &amp;</span>
            <TextLine>Filter <Chev w={8} /></TextLine>
          </BigButton>
          <BigButton $w={74}>
            <IconSlot $h={48}><FindIcon /></IconSlot>
            <span>Find &amp;</span>
            <TextLine>Select <Chev w={8} /></TextLine>
          </BigButton>
        </GroupBody>
        <GroupLabel $shift={4}>
          <span>Editing</span>
        </GroupLabel>
      </Group>

      <Group $w={95}>
        <GroupBody>
          <BigButton $w={93}>
            <IconSlot $h={48}><AddinsIcon /></IconSlot>
            Add-ins
          </BigButton>
        </GroupBody>
        <GroupLabel $shift={5}>
          <span>Add-ins</span>
        </GroupLabel>
      </Group>

      <CollapseArea>
        <Chev w={14} h={8} />
      </CollapseArea>
    </Ribbon>

    <FormulaBar>
      <NameBox>D2<Chev w={14} h={8} /></NameBox>
      <Dots><VDots /></Dots>
      <FxBox>
        <MarkX />
        <Spaced $ml={14}><MarkCheck /></Spaced>
        <FxGlyph>fx</FxGlyph>
        <Chev c="#777" w={14} h={8} />
      </FxBox>
      <FormulaInput>50021<Chev w={14} h={8} /></FormulaInput>
    </FormulaBar>

    <SheetArea>
      <GridWrap>
        <SheetGrid />
        <Selection />
        <ErrorButton>
          <WarnIcon />
          <Tri dir="down" c="#444" w={10} h={5} />
        </ErrorButton>
        <Popup>
          <PopupTitle>Number Stored as Text</PopupTitle>
          <PopupItem><u>C</u>onvert to Number</PopupItem>
          <PopupItem><u>H</u>elp on this Error</PopupItem>
          <PopupRule />
          <PopupItem><u>I</u>gnore Error</PopupItem>
          <PopupItem $disabled>Edit in <u>F</u>ormula Bar</PopupItem>
          <PopupRule />
          <PopupItem>Error Checking <u>O</u>ptions...</PopupItem>
          <RedBox />
        </Popup>
        <ArrowMark width="48" height="70" viewBox="0 0 48 70">
          <path d="M41 4L20 48" stroke="#f00" strokeWidth="5" strokeLinecap="round" />
          <polygon points="4,45 29,49 13,68" fill="#f00" />
        </ArrowMark>
      </GridWrap>
      <VScroll>
        <Tri dir="up" w={14} h={11} />
        <VThumb />
        <ArrowPad $mt={32}><Tri dir="down" w={14} h={11} /></ArrowPad>
      </VScroll>
    </SheetArea>

    <TabStrip>
      <Nav>
        <NavArrow />
        <NavArrow flip />
      </Nav>
      <SheetTab><SheetName>Dataset</SheetName></SheetTab>
      <AddSheet><PlusIcon /></AddSheet>
      <MoreDots><VDots c="#444" /></MoreDots>
      <HScroll>
        <Tri dir="left" w={11} h={15} />
        <HThumb />
        <ArrowPad $ml={26}><Tri dir="right" w={11} h={15} /></ArrowPad>
      </HScroll>
    </TabStrip>

    <StatusBar>
      <StatusText>Ready</StatusText>
      <Spaced $ml={29}><AccessIcon /></Spaced>
      <StatusText $ml={2}>Accessibility: Good to go</StatusText>
      <StatusRight>
        <CountText>Count: 20</CountText>
        <ViewButton $active><NormalViewIcon /></ViewButton>
        <ViewButton><PageViewIcon /></ViewButton>
        <ViewButton><BreakViewIcon /></ViewButton>
        <ZoomMark $ml={3}>−</ZoomMark>
        <ZoomSlider />
        <ZoomMark>+</ZoomMark>
        <StatusText $ml={16}>100%</StatusText>
      </StatusRight>
    </StatusBar>
  </Page>
);

export default App;
